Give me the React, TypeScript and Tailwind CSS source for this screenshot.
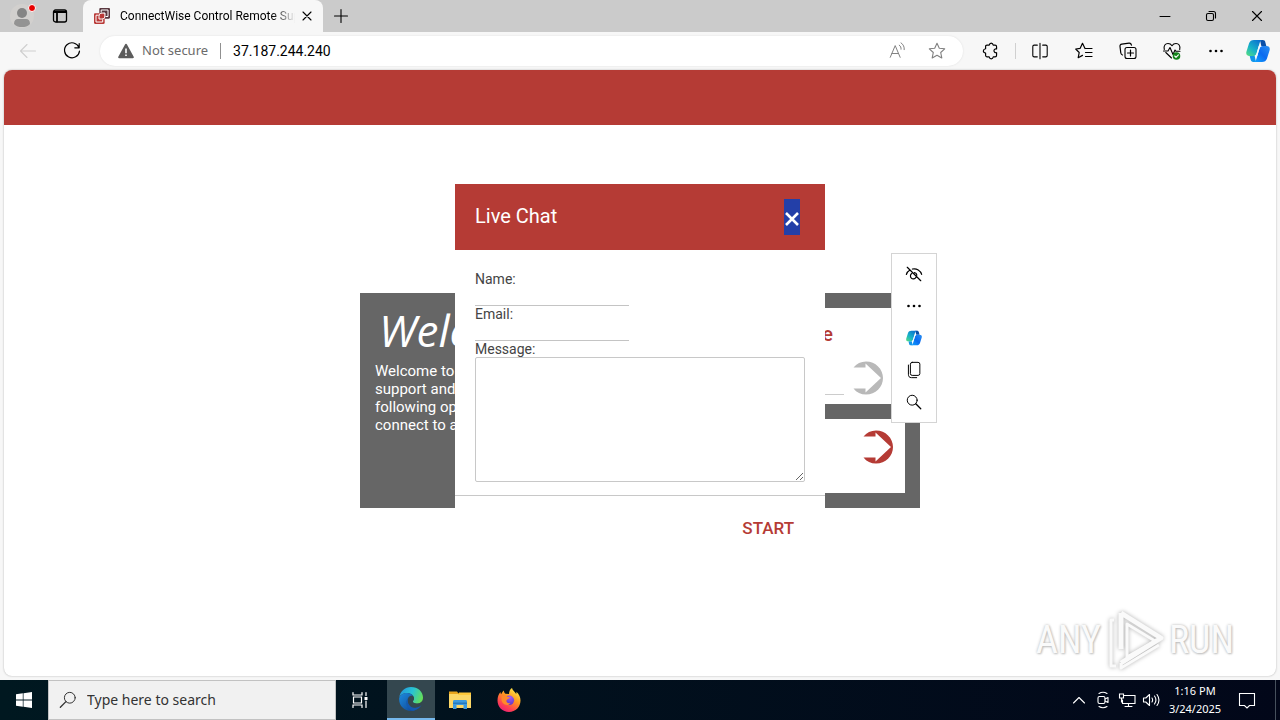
import React from "react";

type IconProps = { children: React.ReactNode; className?: string; box?: string };

function Icon({ children, className = "size-5", box = "0 0 20 20" }: IconProps) {
  return (
    <svg
      viewBox={box}
      className={"shrink-0 " + className}
      fill="none"
      stroke="currentColor"
      strokeWidth="1.1"
      strokeLinecap="round"
      strokeLinejoin="round"
      aria-hidden="true"
    >
      {children}
    </svg>
  );
}

function IconButton({ label, className, children }: { label: string; className: string; children: React.ReactNode }) {
  return (
    <button type="button" aria-label={label} className={"flex shrink-0 items-center justify-center " + className}>
      {children}
    </button>
  );
}

function Copilot({ id, className }: { id: string; className: string }) {
  return (
    <svg viewBox="0 0 24 24" className={className} aria-hidden="true">
      <defs>
        <linearGradient id={id + "a"} x1="0" y1="1" x2="0.8" y2="0">
          <stop offset="0" stopColor="#58e07c" />
          <stop offset="0.45" stopColor="#18b2c8" />
          <stop offset="1" stopColor="#0b6fd0" />
        </linearGradient>
        <linearGradient id={id + "b"} x1="0" y1="1" x2="1" y2="0">
          <stop offset="0" stopColor="#12a8ff" />
          <stop offset="0.5" stopColor="#0a6af0" />
          <stop offset="1" stopColor="#2a8ff2" />
        </linearGradient>
      </defs>
      <path d="M14 1h2.700c1.600 0 2.300.8 2.700 2.400l.9 3.600h-5z" fill="#0a4fa8" />
      <path d="M10 23H7.300c-1.600 0-2.300-.8-2.700-2.400L3.700 17h5z" fill="#1295e8" />
      <path
        d="M8 1h8.500c-1.800.4-2.600 1.900-3.200 4l-2.500 8.400C10 16 9.200 17 7 17H3.500C.8 17-.2 15.200.4 12.800L3 4.500C3.800 2 5.500 1 8 1z"
        fill={`url(#${id}a)`}
      />
      <path
        d="M16 23H7.500c1.800-.4 2.600-1.900 3.200-4l2.500-8.400C14 8 14.800 7 17 7h3.500c2.700 0 3.700 1.800 3.100 4.200L21 19.500c-.8 2.500-2.500 3.500-5 3.500z"
        fill={`url(#${id}b)`}
      />
      <path d="M12.800 7h2.900c-1.300.4-1.900 1.400-2.500 3.600L11.200 17H8.400c1.300-.4 1.900-1.400 2.500-3.600z" fill="#f4fbff" />
    </svg>
  );
}

function EdgeLogo() {
  return (
    <svg viewBox="0 0 24 24" className="size-6" aria-hidden="true">
      <defs>
        <linearGradient id="edgeTop" x1="0" y1="0.3" x2="1" y2="0.6">
          <stop offset="0" stopColor="#2496dc" />
          <stop offset="0.5" stopColor="#28c3d4" />
          <stop offset="1" stopColor="#66df56" />
        </linearGradient>
        <linearGradient id="edgeLow" x1="0" y1="0" x2="1" y2="1">
          <stop offset="0" stopColor="#1c8be0" />
          <stop offset="1" stopColor="#10418c" />
        </linearGradient>
      </defs>
      <path d="M.3 10.500C1 4.500 6 0 12 0c7 0 12 4.800 12 10.500 0 4-3 6-6.300 6-2.700 0-3.900-1-3.900-1.900 0-.8 1.200-1.300 1.200-3.300C15 8.500 12 6 8 6 4 6 1.200 8.200.3 10.500z" fill="url(#edgeTop)" />
      <path d="M.2 11C1.200 8.300 4 6 8 6c2.500 0 5 1.200 6.200 3C9.500 8 8 12 8.800 15c1 4 4.700 7.500 9.200 7-1.800 1.300-3.800 2-6 2C5 24-.5 18.200.2 11z" fill="url(#edgeLow)" />
      <path d="M9.300 11c-2.200 4.500.7 9 5.200 9.800 3.300.5 5.800-.7 8-2.700-1.500 3-5 5.400-8.500 5.700C9 23 4.500 15.500 9.300 11z" fill="#1458b0" />
      <path d="M13 9c1.300.5 2 1.500 2 2.500 0 1.800-1.200 2.300-1.200 3.100 0 1.500 2 2.100 4 2.100 2.300 0 4-.6 5.200-1.700-.5 2.200-3.500 4.500-6.500 4.500C11 19.500 8 13 13 9z" fill="#34474f" />
    </svg>
  );
}

function ExplorerLogo() {
  return (
    <svg viewBox="0 0 22 20" className="h-5 w-6" aria-hidden="true">
      <path d="M0 1.500h8l1.500 2H22V18H0z" fill="#e9a51c" />
      <path d="M0 4h22v14H0z" fill="#fcd767" />
      <path d="M10 2.500h12V5H9z" fill="#ffc83a" />
      <path d="M4 19v-7.500c0-.8.500-1.500 1.500-1.500h11c1 0 1.500.7 1.500 1.500V19h-3.500v-4h-7v4z" fill="#3c9be0" />
      <path d="M4 12.500h14V14H4z" fill="#2579bd" />
    </svg>
  );
}

function FirefoxLogo() {
  return (
    <svg viewBox="0 0 24 24" className="size-6" aria-hidden="true">
      <defs>
        <linearGradient id="fox" x1="0.8" y1="0" x2="0.2" y2="1">
          <stop offset="0" stopColor="#fff14f" />
          <stop offset="0.4" stopColor="#ff9a1f" />
          <stop offset="0.75" stopColor="#ff4052" />
          <stop offset="1" stopColor="#e81a7a" />
        </linearGradient>
        <radialGradient id="globe" cx="0.6" cy="0.2" r="0.8">
          <stop offset="0" stopColor="#a35cf5" />
          <stop offset="1" stopColor="#5b37c7" />
        </radialGradient>
      </defs>
      <path d="M15 0c.5 2.500 3 3.700 4.200 6 .3-.8.300-1.500.1-2.300C22 6 23.500 9 23.500 12.500 23.500 19 18.500 24 12 24S.5 19 .5 12.500c0-3.500 1-6.500 3-8.500 0 1 .2 1.500.6 2.200C5 5 5.500 3.500 7 2.500c-.2 1.500.3 2.500 1.500 3.300L12 6c0-2.500 1-4.800 3-6z" fill="url(#fox)" />
      <circle cx="12.300" cy="12.300" r="4.800" fill="url(#globe)" />
      <path d="M4.500 8.500c2-1.500 4.500-1.300 6 .2 1 .2 2 .3 2.300.8-.3 1.500-2.800 1.300-3.300 3-.5 2 1.500 3.300 4 2.500-2 3.500-8.500 2.300-9-3.500z" fill="#ff8a2a" />
    </svg>
  );
}

function Favicon() {
  return (
    <svg viewBox="0 0 16 16" className="size-4 shrink-0" aria-hidden="true">
      <path d="M6.500 0h8.300c.7 0 1.200.5 1.200 1.200v8.300c0 .7-.5 1.200-1.200 1.200H11V5H5.300V1.200C5.300.5 5.800 0 6.500 0z" fill="#5a3840" />
      <path d="M1.200 5.300h9.500v9.500c0 .7-.5 1.200-1.200 1.200H1.200C.5 16 0 15.500 0 14.800V6.500c0-.7.500-1.200 1.200-1.200z" fill="#b93a38" />
      <path
        d="M7.200 4.500V2h6.800v6.500h-2.500M4.700 7.200H2V14h6.700v-2.700M5 11V8.500C5 6 6 5 8.500 5H11v2.500C11 10 10 11 7.500 11z"
        fill="none"
        stroke="#fff"
        strokeWidth="1"
      />
    </svg>
  );
}

function TabStrip() {
  return (
    <header className="flex h-8 items-stretch bg-[#cbcbcb] text-black">
      <IconButton label="Profile" className="relative w-11">
        <svg viewBox="0 0 24 24" className="size-6" aria-hidden="true">
          <circle cx="12" cy="12" r="12" fill="#d2d0ce" />
          <circle cx="12" cy="9" r="5" fill="#858585" />
          <path d="M4 20c0-3.500 1.500-5 4-5h8c2.500 0 4 1.500 4 5-2 2.500-5 3-8 3s-6-.5-8-3z" fill="#939393" />
        </svg>
        <span className="absolute top-1 right-2 size-2 rounded-full border border-white bg-[#e80000]" />
      </IconButton>
      <IconButton label="Tab actions" className="w-8">
        <Icon className="size-4" box="0 0 16 16">
          <rect x="1.500" y="2" width="13" height="12" rx="2" strokeWidth="1.300" />
          <path d="M2 4h12M5 5v8.500" strokeWidth="1.800" />
        </Icon>
      </IconButton>
      <div className="ml-[7px] flex w-60 items-center rounded-t-lg bg-[#f7f7f7] pr-2 pl-[11px]">
        <Favicon />
        <span className="ml-[10px] min-w-0 flex-1 overflow-hidden bg-gradient-to-r from-black from-85% to-[#f7f7f7] bg-clip-text font-['Roboto'] text-xs whitespace-nowrap text-transparent">
          ConnectWise Control Remote Support
        </span>
        <IconButton label="Close tab" className="ml-1 size-4">
          <Icon className="size-3" box="0 0 12 12">
            <path d="M2 2l8 8M10 2l-8 8" />
          </Icon>
        </IconButton>
      </div>
      <IconButton label="New tab" className="w-9">
        <Icon className="size-4" box="0 0 16 16">
          <path d="M8 1.500v13M1.500 8h13" />
        </Icon>
      </IconButton>
      <div className="flex-1" />
      <IconButton label="Minimize" className="w-[46px]">
        <Icon className="size-3" box="0 0 12 12">
          <path d="M1 6.500h10" strokeWidth="1" />
        </Icon>
      </IconButton>
      <IconButton label="Restore" className="w-[46px]">
        <Icon className="size-3" box="0 0 12 12">
          <rect x="1.500" y="3.500" width="7" height="7" rx="1.500" />
          <path d="M4 1.500h4.500c1.500 0 2 .8 2 2V8" />
        </Icon>
      </IconButton>
      <IconButton label="Close window" className="w-[46px]">
        <Icon className="size-3" box="0 0 12 12">
          <path d="M1.500 1.500l9 9M10.500 1.500l-9 9" />
        </Icon>
      </IconButton>
    </header>
  );
}

const starPath = "M10 2.200l2.300 5 5.400.6-4 3.700 1.100 5.400L10 14.200l-4.800 2.700 1.100-5.400-4-3.700 5.400-.6z";

function Toolbar() {
  return (
    <nav className="flex h-[38px] items-center bg-[#f7f7f7] text-black" aria-label="Browser toolbar">
      <IconButton label="Back" className="ml-1.5 w-11 text-[#cfcfcf]">
        <Icon>
          <path d="M17.500 10H2.500M9 3.500L2.500 10 9 16.500" />
        </Icon>
      </IconButton>
      <IconButton label="Refresh" className="w-11">
        <Icon>
          <path d="M17 6.500A7.500 7.500 0 1 0 17.500 10M17.200 2.500v4.300h-4.400" strokeWidth="1.200" />
        </Icon>
      </IconButton>
      <div className="ml-1.5 flex h-[30px] flex-1 items-center rounded-full bg-white pr-3.5 pl-[18px] shadow-[0_0_2px_#ddd]">
        <svg viewBox="0 0 16 16" className="size-4" aria-hidden="true">
          <path d="M8 .8c.5 0 .8.2 1 .6l6.700 12.300c.4.800 0 1.500-.9 1.500H1.200c-.9 0-1.300-.7-.9-1.500L7 1.400c.2-.4.5-.6 1-.6z" fill="#5c5c5c" />
          <path d="M7.200 5.500h1.600v4.700H7.200zM7.200 11.500h1.600v1.600H7.200z" fill="#fff" />
        </svg>
        <span className="ml-2 text-[13px] text-[#6b6b6b]">Not secure</span>
        <span className="mx-3 h-4 w-px bg-[#909090]" />
        <input
          aria-label="Address"
          defaultValue="37.187.244.240"
          className="min-w-0 flex-1 bg-transparent font-['Roboto'] text-sm text-black outline-none"
        />
        <IconButton label="Read aloud" className="w-10 text-[#808080]">
          <Icon className="size-[18px]">
            <path d="M2.500 17L8 4l5.500 13M4.300 12.800h7.400M12.500 3.500c1.500 1 2.200 2.700 2 4.500M14.500 1c2.700 1.800 3.800 4.500 3.500 7.500" />
          </Icon>
        </IconButton>
        <IconButton label="Favorite this page" className="-mr-2 w-10 text-[#808080]">
          <Icon>
            <path d={starPath} />
          </Icon>
        </IconButton>
      </div>
      <IconButton label="Extensions" className="ml-1.5 w-11">
        <Icon className="size-[18px]">
          <path d="M5.500 3.500H8c.3-1.500 1-2.300 2.200-2.300s2 .8 2.300 2.300h2c1 0 1.700.7 1.700 1.700v2.500c-2-.3-2.900.8-2.900 2.100s1 2.400 2.900 2.100v2.800c0 1-.7 1.800-1.700 1.800h-2c-.3 1.500-1.100 2.200-2.300 2.200S8.300 18 8 16.500H5.700c-1 0-1.700-.8-1.700-1.800v-2.500c-1.700-.2-2.500-1-2.500-2.300S2.300 7.800 4 7.500V5c0-.9.600-1.500 1.500-1.500z" strokeWidth="1.300" />
        </Icon>
      </IconButton>
      <span className="mx-0.5 h-4 w-px bg-[#d0d0d0]" />
      <IconButton label="Split screen" className="w-11">
        <Icon className="size-[18px]">
          <path d="M7 3.500H3.500c-1 0-1.500.5-1.500 1.500v10c0 1 .5 1.500 1.500 1.500H7M13 3.500h3.500c1 0 1.500.5 1.500 1.500v10c0 1-.5 1.500-1.500 1.500H13M10 1.500v17" strokeWidth="1.200" />
        </Icon>
      </IconButton>
      <IconButton label="Favorites" className="w-11">
        <Icon>
          <path d="M11 7.500L8.500 2.300l-2.300 5-4.500.7 3.500 3.500-1 5.200 4.300-2.300M11 7.500h7M11.500 11.500H18M11.500 15.500H18" strokeWidth="1.200" />
        </Icon>
      </IconButton>
      <IconButton label="Collections" className="w-11">
        <Icon>
          <rect x="7" y="6.500" width="11" height="11" rx="2" />
          <path d="M12.500 9v6M9.500 12h6M4.500 14c-1-.3-1.500-1-1.700-2L2 5.500C1.800 4.200 2.500 3.300 3.800 3.100l7.200-1c1.300-.2 2.100.5 2.500 2" strokeWidth="1.200" />
        </Icon>
      </IconButton>
      <IconButton label="Browser essentials" className="w-11">
        <Icon>
          <path d="M2.300 8.500C1.300 4.500 3.500 2.500 6 2.500c2 0 3.200 1 4 2.200.8-1.200 2-2.200 4-2.200 2.500 0 4.700 2 3.700 6M3.800 11.500L9.500 17M1.500 10H6l2-3.500 3 7L13 9l1 1.300h4" />
          <circle cx="14.500" cy="15" r="3.800" fill="#13831a" stroke="none" />
          <path d="M12.700 15l1.300 1.300 2.400-2.500" stroke="#fff" />
        </Icon>
      </IconButton>
      <IconButton label="Settings and more" className="w-11">
        <Dots />
      </IconButton>
      <IconButton label="Copilot" className="mr-0.5 w-10">
        <Copilot id="copLarge" className="size-6" />
      </IconButton>
    </nav>
  );
}

function Dots() {
  return (
    <Icon className="size-4" box="0 0 16 16">
      <g fill="currentColor" stroke="none">
        <circle cx="2.500" cy="8" r="1.300" />
        <circle cx="8" cy="8" r="1.300" />
        <circle cx="13.500" cy="8" r="1.300" />
      </g>
    </Icon>
  );
}

function GoArrow() {
  return (
    <svg viewBox="0 0 32 34" className="h-[34px] w-8 shrink-0" aria-hidden="true">
      <path
        d="M1.500 6.500C4.500 2.500 9 .5 14 .5 23.500 .5 31 8 31 17S23.500 33.500 14 33.500C9 33.500 4.500 31.500 1.500 27.500h12v4L29 17 13.500 2.500v4z"
        fill="currentColor"
      />
    </svg>
  );
}

function WelcomePanel() {
  return (
    <section className="mx-auto mt-[168px] flex h-[215px] w-[560px] bg-[#666] p-[15px] text-[15px] leading-[18px]">
      <div className="w-[230px] text-white">
        <h1 className="ml-1 font-['Open_Sans'] text-[44px] leading-[44px] font-medium italic">Welcome</h1>
        <p className="mt-2.5">
          Welcome to remote
          <br />
          support and use the
          <br />
          following options to
          <br />
          connect to a session.
        </p>
      </div>
      <div className="flex flex-1 flex-col gap-[15px]">
        <div className="flex h-24 flex-col bg-white pt-3.5 pr-[21px] pl-4">
          <h2 className="pr-[51px] text-right text-xl leading-6 font-medium text-[#b53b35]">Join with a Code</h2>
          <div className="mt-[15px] flex items-end gap-2">
            <input aria-label="Code" className="min-w-0 flex-1 border-b border-[#ccc] outline-none" />
            <button type="button" aria-label="Join with code" className="text-[#b9b9b9]">
              <GoArrow />
            </button>
          </div>
        </div>
        <div className="flex flex-1 items-start justify-between bg-white pt-[11px] pr-[11px] pl-4">
          <h2 className="text-xl font-medium text-[#b53b35]">Chat</h2>
          <button type="button" aria-label="Open live chat" className="text-[#b53b35]">
            <GoArrow />
          </button>
        </div>
      </div>
    </section>
  );
}

function ChatDialog() {
  const field = "block h-[18px] w-[154px] border-b border-[#c4c4c4] outline-none";
  const label = "block text-sm leading-[17px]";
  return (
    <form role="dialog" aria-label="Live Chat" className="w-[370px] bg-white text-[#444]">
      <div className="flex h-[66px] items-center justify-between bg-[#b53b35] pr-[25px] pl-5 text-white">
        <h2 className="pb-0.5 text-xl">Live Chat</h2>
        <button type="button" aria-label="Close" className="flex h-9 w-4 items-center justify-center bg-[#233fa8] pt-1">
          <svg viewBox="0 0 14 14" className="size-3.5" aria-hidden="true">
            <path d="M1 1l12 12M13 1L1 13" stroke="#fff" strokeWidth="2.600" />
          </svg>
        </button>
      </div>
      <div className="border-b border-[#c8c8c8] px-5 pt-[21px] pb-[13px]">
        <label htmlFor="name" className={label}>Name:</label>
        <input id="name" className={field} />
        <label htmlFor="email" className={label}>Email:</label>
        <input id="email" className={field} />
        <label htmlFor="message" className={label}>Message:</label>
        <textarea
          id="message"
          className="-mt-px block h-[125px] w-full resize rounded-xs border border-[#c8c8c8] outline-none"
        />
      </div>
      <div className="flex justify-end px-[31px] py-5">
        <button type="button" className="text-[17px] leading-6 font-medium text-[#b53b35]">
          START
        </button>
      </div>
    </form>
  );
}

function MiniMenu() {
  return (
    <div role="toolbar" aria-label="Mini menu" className="flex w-[46px] flex-col items-center border border-[#d4d4d4] bg-white py-1 text-black">
      <IconButton label="Hide menu" className="size-8">
        <Icon className="size-[18px]">
          <path d="M1.500 10.500C2.200 8.300 3.600 6.700 5.500 5.600M8.200 4.500C13 3.500 17.300 6 18.500 10.500M2.500 2.500l15 15M7.500 9.500a3.200 3.200 0 1 0 4.500 4.300M10.500 8.500c1.300.2 2.500 1.200 2.700 2.700" strokeWidth="1.300" />
        </Icon>
      </IconButton>
      <IconButton label="More" className="size-8">
        <Dots />
      </IconButton>
      <IconButton label="Ask Copilot" className="size-8">
        <Copilot id="copSmall" className="size-4" />
      </IconButton>
      <IconButton label="Copy" className="size-8">
        <Icon className="size-[18px]">
          <rect x="6" y="1.500" width="10.500" height="14.500" rx="2" />
          <path d="M3.800 4.500v10.200c0 2.500 1 3.800 3.400 3.800H13" />
        </Icon>
      </IconButton>
      <IconButton label="Search" className="size-8">
        <Icon className="size-[18px]">
          <circle cx="8" cy="8" r="5.500" />
          <path d="M12 12l5.500 5.500" strokeWidth="1.400" />
        </Icon>
      </IconButton>
    </div>
  );
}

function Watermark() {
  return (
    <div className="flex items-center font-['Liberation_Sans_Narrow','Roboto_Condensed','Roboto',sans-serif] text-[38px] leading-none text-[#fafafa] [text-shadow:0_0_3px_#b8b8b8,1px_1px_2px_#c8c8c8]">
      <span>ANY</span>
      <svg viewBox="0 0 60 64" className="ml-1 h-16 w-[60px] drop-shadow-[0_0_2px_#b0b0b0]" fill="none" stroke="#fafafa" strokeLinejoin="round" aria-hidden="true">
        <path d="M16 5v36M16 5l40 25-40 25" strokeWidth="5" />
        <path d="M9 12H6v46h5M16 55v5l38-23M22 16l28 17-28 16z" strokeWidth="3" />
      </svg>
      <span className="ml-1">RUN</span>
    </div>
  );
}

function Taskbar() {
  return (
    <footer className="flex h-10 items-stretch bg-gradient-to-r from-[#001820] to-[#020719] text-white">
      <IconButton label="Start" className="w-12">
        <svg viewBox="0 0 16 16" className="size-4" fill="#fff" aria-hidden="true">
          <path d="M0 2.300L6.800 1.300v6.300H0zM7.500 1.200L16 0v7.600H7.500zM0 8.400h6.800v6.300L0 13.700zM7.500 8.400H16V16l-8.500-1.200z" />
        </svg>
      </IconButton>
      <label className="flex w-72 items-center border border-[#c2c2c2] bg-[#f1f1f1] pl-2.5 text-[#333]">
        <Icon className="size-[18px]">
          <circle cx="12" cy="7.500" r="6" />
          <path d="M7.700 11.800L1.500 18" strokeWidth="1.500" />
        </Icon>
        <input
          aria-label="Search"
          placeholder="Type here to search"
          className="ml-2.5 min-w-0 flex-1 bg-transparent text-sm outline-none placeholder:text-[#333]"
        />
      </label>
      <IconButton label="Task view" className="w-[51px]">
        <Icon className="-ml-1 size-[18px]" box="0 0 18 18">
          <path d="M2 1.500V4h9V1.500M2 16.500V14h9v2.500M2.500 6h8v6h-8zM15 1.500v3M15 10v6.500" strokeWidth="1.200" strokeLinejoin="miter" />
          <path d="M13.500 6h3v3h-3z" fill="currentColor" stroke="none" />
        </Icon>
      </IconButton>
      <IconButton label="Microsoft Edge" className="w-12 border-b-2 border-[#76b9ed] bg-[#34474f]">
        <EdgeLogo />
      </IconButton>
      <IconButton label="File Explorer" className="w-[50px]">
        <ExplorerLogo />
      </IconButton>
      <IconButton label="Firefox" className="w-12">
        <FirefoxLogo />
      </IconButton>
      <div className="flex-1" />
      <IconButton label="Show hidden icons" className="w-6">
        <Icon className="size-3.5" box="0 0 14 14">
          <path d="M1.500 10L7 4.500l5.500 5.500" />
        </Icon>
      </IconButton>
      <IconButton label="Camera" className="w-6">
        <Icon className="size-[18px]" box="0 0 18 18">
          <rect x="4" y="5.500" width="7" height="7" rx="1.500" />
          <path d="M11 8l3-1.500v5L11 10M5 2.500c2.500-1.500 5.500-1.500 8 0M5 15.500c2.500 1.500 5.500 1.500 8 0" />
        </Icon>
      </IconButton>
      <IconButton label="Network" className="w-6">
        <Icon className="size-[18px]" box="0 0 18 18">
          <path d="M6 4.500h11v8H4.500V9M10.500 12.500v3M7 15.500h7M1.500 3h4v4h-4zM3.500 7v4" strokeLinejoin="miter" />
        </Icon>
      </IconButton>
      <IconButton label="Volume" className="w-6">
        <Icon className="size-[18px]" box="0 0 18 18">
          <path d="M1.500 7h2.300l3.700-3.500v11L3.800 11H1.500zM10 7c.8 1.300.8 2.700 0 4M12.500 5c1.800 2.500 1.800 5.500 0 8M15 3.500c2.500 3.500 2.500 7.500 0 11" />
        </Icon>
      </IconButton>
      <button type="button" className="flex w-16 flex-col items-center justify-center text-[11px] leading-[18px]">
        <span>1:16 PM</span>
        <span>3/24/2025</span>
      </button>
      <IconButton label="Notifications" className="w-10">
        <Icon className="size-[18px]" box="0 0 18 18">
          <path d="M1.500 2.500h15v12h-5L9 17l-2.500-2.500h-5z" strokeLinejoin="miter" />
        </Icon>
      </IconButton>
      <IconButton label="Show desktop" className="mr-1 ml-[5px] w-1 border-r border-[#46505c]">
        <span />
      </IconButton>
    </footer>
  );
}

export default function App() {
  return (
    <div className="flex min-h-screen flex-col bg-[#f7f7f7] font-['Noto_Sans','Open_Sans',sans-serif]">
      <TabStrip />
      <Toolbar />
      <main className="relative mx-1 mb-1 flex-1 overflow-hidden rounded-lg bg-white font-['Roboto',sans-serif] shadow-[0_0_2px_#aaa]">
        <div className="h-[55px] bg-[#b53b35]" />
        <WelcomePanel />
        <div className="absolute inset-x-0 top-[114px] flex justify-center">
          <ChatDialog />
        </div>
        <div className="absolute top-[183px] left-1/2 ml-[251px]">
          <MiniMenu />
        </div>
        <div className="absolute right-[42px] bottom-1">
          <Watermark />
        </div>
      </main>
      <Taskbar />
    </div>
  );
}
